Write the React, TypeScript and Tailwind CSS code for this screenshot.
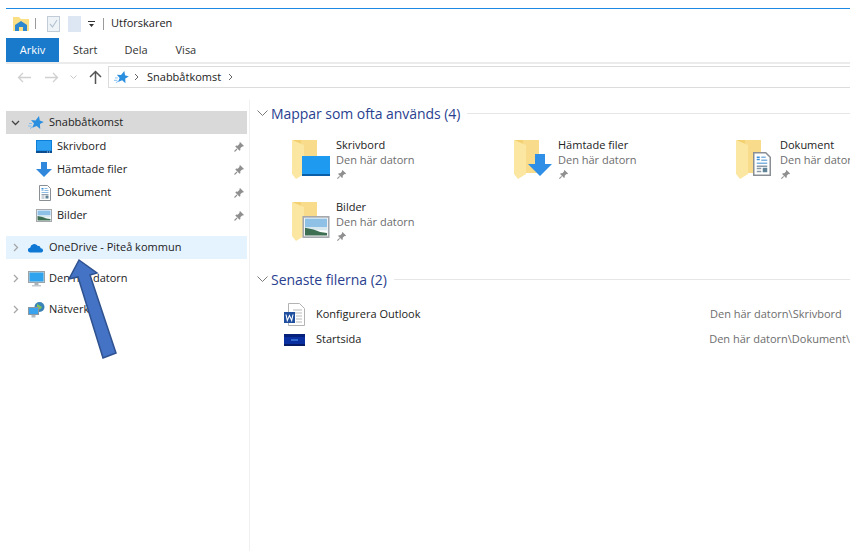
import React from 'react';

const UI_FONT = "font-['Open_Sans','Noto_Sans',sans-serif]";

function Chevron({ open }: { open?: boolean }) {
  return (
    <svg width="9" height="9" viewBox="0 0 9 9" fill="none" stroke={open ? '#444' : '#a6a6a6'} strokeWidth="1.3">
      {open ? <path d="M1 3l3.500 3.500L8 3" /> : <path d="M3 1l3.500 3.500L3 8" />}
    </svg>
  );
}

function Pin({ size = 12 }: { size?: number }) {
  return (
    <svg width={size} height={size} viewBox="0 0 12 12">
      <path d="M7 1l4 4-1 .6-.8-.2L7.300 7.300l.1 1.600-.8.8-4.300-4.300.8-.8 1.600.1 1.900-1.900-.2-.8z" fill="#8f8f8f" />
      <path d="M4 8L1.500 10.500" stroke="#8f8f8f" strokeWidth="1.100" />
    </svg>
  );
}

function QuickStar({ size = 16 }: { size?: number }) {
  return (
    <svg width={size} height={size} viewBox="0 0 16 16">
      <path d="M11 1l.8 4.600 4 1.400-3.800 2 .2 5-3.500-3-4.500 1.800 1.800-4.400L3 5l4.500.4z" fill="#2b8fe0" />
      <path d="M1 8.500h3M0 11h3.500M2 13.500l2.500-1.500" stroke="#7fbdf0" strokeWidth="1" />
    </svg>
  );
}

function DesktopIcon() {
  return (
    <svg width="16" height="13" viewBox="0 0 16 13">
      <rect width="16" height="13" fill="#0d7fd8" />
      <path d="M1 1h14v9.500H1z" fill="#2ea0f2" />
      <rect y="11" width="16" height="2" fill="#0b4d8e" />
      <path d="M11 12h1M13 12h1" stroke="#cde6fa" strokeWidth="0.800" />
    </svg>
  );
}

function DownloadIcon() {
  return (
    <svg width="16" height="16" viewBox="0 0 16 16">
      <path d="M5 0h6v7h5l-8 8-8-8h5z" fill="#2f88dc" />
    </svg>
  );
}

function DocIcon({ size = 16 }: { size?: number }) {
  return (
    <svg width={size} height={size} viewBox="0 0 16 16">
      <path d="M2.500 .5h8l3 3v12h-11z" fill="#fff" stroke="#8a8f96" />
      <path d="M4.500 3.500h2M4.500 5h2" stroke="#3a8fdb" strokeWidth="1.100" />
      <path d="M7.500 3.500h3M7.500 5.500h4M4.500 7.500h7" stroke="#7fb4e0" strokeWidth="0.900" />
      <path d="M4.500 9.500h7M4.500 11h3M4.500 13h3" stroke="#8a9aa8" strokeWidth="0.900" />
      <rect x="8.500" y="10.500" width="3" height="3" fill="#5f8296" />
    </svg>
  );
}

function PicturesIcon({ w = 16, h = 13 }: { w?: number; h?: number }) {
  return (
    <svg width={w} height={h} viewBox="0 0 16 13">
      <rect x="0.500" y="0.500" width="15" height="12" fill="#fff" stroke="#a5a9ad" />
      <rect x="1.500" y="1.500" width="13" height="5" fill="#8fc0e6" />
      <rect x="1.500" y="6.500" width="13" height="2" fill="#d8e8ef" />
      <path d="M1.500 7l5 1 4 1.500 4 .5v1.500h-13z" fill="#3f6f52" />
    </svg>
  );
}

function CloudIcon() {
  return (
    <svg width="16" height="10" viewBox="0 0 16 10">
      <path d="M2.500 9.500a2.400 2.400 0 0 1-.3-4.800A4 4 0 0 1 9.500 2.800a3 3 0 0 1 3.200 2.400 2.200 2.200 0 0 1 .8 4.300z" fill="#0f78d4" />
    </svg>
  );
}

function MonitorIcon() {
  return (
    <svg width="17" height="16" viewBox="0 0 17 16">
      <rect x="0.500" y="0.500" width="16" height="11" fill="#cfd6db" stroke="#9aa3aa" />
      <rect x="1.500" y="1.500" width="14" height="9" fill="#2fa3ee" />
      <rect x="6.500" y="11.500" width="4" height="2.500" fill="#aab2b8" />
      <rect x="4" y="14" width="9" height="1.500" fill="#c3c9ce" />
    </svg>
  );
}

function NetworkIcon() {
  return (
    <svg width="17" height="16" viewBox="0 0 17 16">
      <circle cx="11.500" cy="5" r="5" fill="#3a83b8" />
      <path d="M9 1.500c1.500 2 4 2 5 4-1 1-3 3-5 1z" fill="#7cc35c" />
      <rect x="0.500" y="5.500" width="10" height="7" fill="#39a3ee" stroke="#8c979f" />
      <rect x="3.500" y="13" width="4" height="2.500" fill="#b3bac0" />
    </svg>
  );
}

function WordIcon() {
  return (
    <svg width="21" height="23" viewBox="0 0 21 23">
      <path d="M4.500 .5h11l5 5v17h-16z" fill="#fff" stroke="#b3b3b3" />
      <path d="M9 7h9M11 10h7M12 13h6M12 16h6M12 19h6" stroke="#b9b9b9" />
      <rect y="9" width="11" height="11" fill="#1f4f9e" />
      <path d="M2 11.500l1.300 6 2.200-5 2.200 5 1.300-6" fill="none" stroke="#fff" strokeWidth="1.100" />
    </svg>
  );
}

function WideBlueIcon() {
  return (
    <svg width="21" height="12" viewBox="0 0 21 12">
      <rect width="21" height="12" fill="#0a2fa0" />
      <rect width="21" height="3" fill="#06217c" />
      <path d="M7 6h7" stroke="#4c8fe8" strokeWidth="1.200" />
      <rect y="10" width="21" height="2" fill="#061c66" />
    </svg>
  );
}

// manila folder with a badge sitting on its lower right corner
function Folder({ children }: { children: React.ReactNode }) {
  return (
    <div className="relative ml-[2px] mt-[3px] w-[38px] h-[39px] shrink-0">
      <svg width="25" height="39" viewBox="0 0 25 39" className="absolute left-0 top-0">
        <path d="M1 0h24v33H1z" fill="#f3d070" />
        <path d="M9 0h16v33H9z" fill="#f8dc8c" />
        <path d="M0 0l12 5v29l-8 5-4-5z" fill="#fbe6a2" />
      </svg>
      <div className="absolute right-0 bottom-[3px] flex items-end justify-end">{children}</div>
    </div>
  );
}

function NavItem({ icon, label, pinned }: { icon: React.ReactNode; label: string; pinned?: boolean }) {
  return (
    <div className="h-[23px] flex items-center pl-[30px] pr-[2px]">
      <div className="w-[20px] flex justify-start items-center">{icon}</div>
      <span className="ml-[1px] flex-1 text-[#222]">{label}</span>
      {pinned && <Pin />}
    </div>
  );
}

function NavRoot({ icon, label, open, className = '' }: { icon: React.ReactNode; label: string; open?: boolean; className?: string }) {
  return (
    <div className={`h-[23px] flex items-center pl-[5px] ${className}`}>
      <Chevron open={open} />
      <div className="ml-[8px] w-[20px] flex justify-start items-center">{icon}</div>
      <span className="ml-[1px] text-[#222]">{label}</span>
    </div>
  );
}

function SectionHeader({ title }: { title: string }) {
  return (
    <div className="h-[20px] flex items-center">
      <svg width="11" height="7" viewBox="0 0 11 7" fill="none" stroke="#7b7b7b" strokeWidth="1">
        <path d="M.5 .5l5 5 5-5" />
      </svg>
      <span className="ml-[3px] text-[14px] text-[#2a3f8f] whitespace-nowrap tracking-[-0.05px]">{title}</span>
      <div className="ml-[7px] flex-1 h-[1px] bg-[#e6e6e6]" />
    </div>
  );
}

function Tile({ icon, name }: { icon: React.ReactNode; name: string }) {
  return (
    <div className="flex h-[62px]">
      <Folder>{icon}</Folder>
      <div className="ml-[6px] flex flex-col leading-[15px] whitespace-nowrap">
        <span className="text-[#222]">{name}</span>
        <span className="text-[#6d6d6d]">Den här datorn</span>
        <span className="mt-[2px]"><Pin size={11} /></span>
      </div>
    </div>
  );
}

function RecentRow({ icon, name, path }: { icon: React.ReactNode; name: string; path: string }) {
  return (
    <div className="h-[25px] flex items-center">
      <div className="w-[32px] flex justify-start">{icon}</div>
      <span className="text-[#222] w-[394px] whitespace-nowrap">{name}</span>
      <span className="text-[#6d6d6d] whitespace-nowrap">{path}</span>
    </div>
  );
}

export default function App() {
  return (
    <div className={`relative w-[850px] h-[551px] overflow-hidden bg-white text-[11px] ${UI_FONT}`}>
      <div className="ml-[6px] mt-[8px] h-[1px] bg-[#1e88e5]" />

      {/* title bar */}
      <div className="h-[29px] ml-[13px] flex items-center">
        <svg width="16" height="14" viewBox="0 0 16 14">
          <path d="M0 0h6l2 2h8v12H0z" fill="#fbdf85" />
          <path d="M8 4l6 4v6H2V8z" fill="#2a87d0" />
          <rect x="6" y="10" width="4" height="4" fill="#fbdf85" />
        </svg>
        <div className="ml-[6px] w-[1px] h-[11px] bg-[#9a9a9a]" />
        <svg className="ml-[11px]" width="13" height="16" viewBox="0 0 13 16">
          <rect x="0.500" y="0.500" width="12" height="15" fill="#eef3f8" stroke="#c2ccd6" />
          <path d="M3 8l2.500 3L10 4" fill="none" stroke="#b5c4d2" strokeWidth="1.200" />
        </svg>
        <svg className="ml-[8px]" width="13" height="16" viewBox="0 0 13 16">
          <rect width="13" height="16" fill="#dde7f3" />
        </svg>
        <svg className="ml-[7px]" width="8" height="8" viewBox="0 0 8 8">
          <path d="M0 1h7v1H0zM1 4h5L3.500 7z" fill="#333" />
        </svg>
        <div className="ml-[7px] w-[1px] h-[12px] bg-[#9a9a9a]" />
        <span className="ml-[7px] text-[#222]">Utforskaren</span>
      </div>

      {/* ribbon tabs */}
      <div className="ml-[6px] h-[26px] flex items-center border-b-[2px] border-[#ebebeb]">
        <div className="w-[53px] h-[24px] bg-[#1979ca] text-white flex items-center justify-center">Arkiv</div>
        <span className="ml-[14px] text-[#333]">Start</span>
        <span className="ml-[27px] text-[#333]">Dela</span>
        <span className="ml-[28px] text-[#333]">Visa</span>
      </div>

      {/* navigation and address bar */}
      <div className="mt-[2px] h-[22px] ml-[17px] flex items-center">
        <svg width="14" height="11" viewBox="0 0 14 11" fill="none" stroke="#d0d0d0" strokeWidth="1.300">
          <path d="M14 5.500H1.500M6 1L1.500 5.500 6 10" />
        </svg>
        <svg className="ml-[14px]" width="14" height="11" viewBox="0 0 14 11" fill="none" stroke="#d0d0d0" strokeWidth="1.300">
          <path d="M0 5.500h12.500M8 1l4.500 4.500L8 10" />
        </svg>
        <svg className="ml-[11px]" width="7" height="5" viewBox="0 0 7 5" fill="none" stroke="#c8c8c8">
          <path d="M.5 .5l3 3 3-3" />
        </svg>
        <svg className="ml-[12px]" width="13" height="14" viewBox="0 0 13 14" fill="none" stroke="#555" strokeWidth="1.500">
          <path d="M6.500 14V1.500M1 7l5.500-5.500L12 7" />
        </svg>
        <div className="ml-[6px] flex-1 h-[22px] border border-[#dcdcdc] border-r-0 flex items-center pl-[5px]">
          <QuickStar size={15} />
          <svg className="ml-[5px]" width="6" height="8" viewBox="0 0 6 8" fill="none" stroke="#666">
            <path d="M1 1l3 3-3 3" />
          </svg>
          <span className="ml-[7px] text-[#222]">Snabbåtkomst</span>
          <svg className="ml-[7px]" width="6" height="8" viewBox="0 0 6 8" fill="none" stroke="#666">
            <path d="M1 1l3 3-3 3" />
          </svg>
        </div>
      </div>

      <div className="flex mt-[12px] h-[463px]">
        {/* navigation pane */}
        <div className="w-[250px] shrink-0 pl-[6px] pr-[2px] pt-[11px] border-r border-[#f0f0f0]">
          <NavRoot open label="Snabbåtkomst" icon={<QuickStar />} className="bg-[#d9d9d9] mb-[1px]" />
          <NavItem label="Skrivbord" icon={<DesktopIcon />} pinned />
          <NavItem label="Hämtade filer" icon={<DownloadIcon />} pinned />
          <NavItem label="Dokument" icon={<div className="ml-[1px]"><DocIcon /></div>} pinned />
          <NavItem label="Bilder" icon={<PicturesIcon />} pinned />
          <NavRoot label="OneDrive - Piteå kommun" icon={<CloudIcon />} className="mt-[9px] bg-[#e5f3ff]" />
          <NavRoot label="Den här datorn" icon={<MonitorIcon />} className="mt-[8px]" />
          <NavRoot label="Nätverk" icon={<NetworkIcon />} className="mt-[8px]" />
        </div>

        {/* folder view */}
        <div className="flex-1 min-w-0 pl-[7px] pt-[3px]">
          <SectionHeader title="Mappar som ofta används (4)" />
          <div className="mt-[14px] ml-[33px] grid grid-cols-[222px_222px_222px]">
            <Tile name="Skrivbord" icon={<div className="w-[28px] h-[20px] bg-[#1e9bf0] border-b-[2px] border-[#0b5fa8]" />} />
            <Tile name="Hämtade filer" icon={<svg width="24" height="22" viewBox="0 0 24 22"><path d="M7 0h10v10h7L12 22 0 10h7z" fill="#2f8fe6" /></svg>} />
            <Tile name="Dokument" icon={<DocIcon size={24} />} />
            <Tile name="Bilder" icon={<PicturesIcon w={28} h={22} />} />
          </div>
          <div className="mt-[8px]">
            <SectionHeader title="Senaste filerna (2)" />
          </div>
          <div className="mt-[13px] ml-[27px]">
            <RecentRow name="Konfigurera Outlook" path="Den här datorn\Skrivbord" icon={<WordIcon />} />
            <RecentRow name="Startsida" path="Den här datorn\Dokument\" icon={<WideBlueIcon />} />
          </div>
        </div>
      </div>

      {/* callout arrow pointing at the OneDrive entry */}
      <svg className="absolute left-[60px] top-[255px]" width="65" height="110" viewBox="60 255 65 110">
        <path d="M79 260L97 273 90 275 116 353 103 358 78 277 69 279z" fill="#4472c4" stroke="#2f528f" strokeWidth="1.500" />
      </svg>
    </div>
  );
}
